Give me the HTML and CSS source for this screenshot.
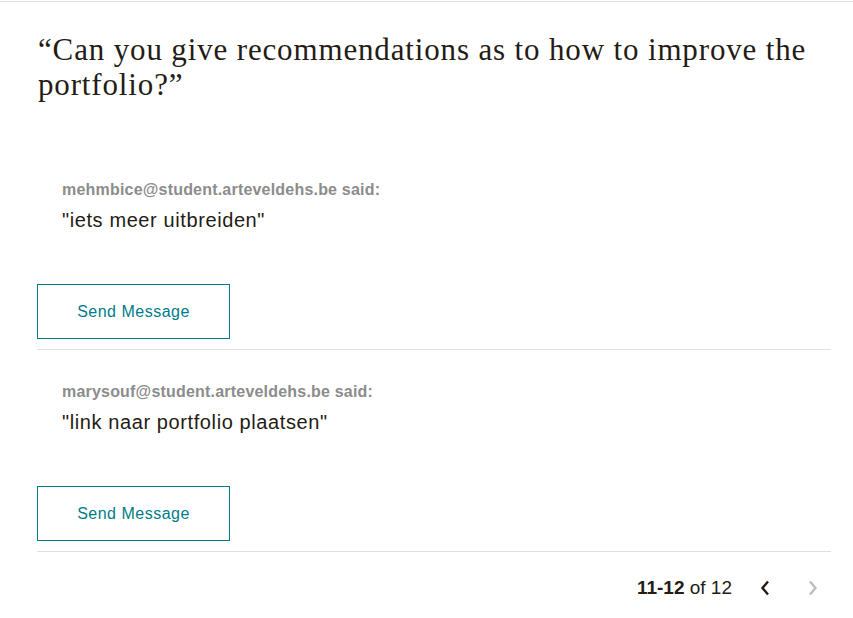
FILE: index.html
```html
<!DOCTYPE html>
<html>
<head>
<meta charset="utf-8">
<link rel="stylesheet" href="styles.css">
</head>
<body>
<div class="page">
  <h1 class="question">“Can you give recommendations as to how to improve the portfolio?”</h1>
  <div class="answers">
    <div class="answer">
      <div class="answer-body">
        <div class="author">mehmbice@student.arteveldehs.be said:</div>
        <div class="text">"iets meer uitbreiden"</div>
      </div>
      <button class="send">Send Message</button>
    </div>
    <div class="answer">
      <div class="answer-body">
        <div class="author">marysouf@student.arteveldehs.be said:</div>
        <div class="text">"link naar portfolio plaatsen"</div>
      </div>
      <button class="send">Send Message</button>
    </div>
  </div>
  <div class="pager">
    <span class="count"><b>11-12</b> of 12</span>
    <span class="arrow prev"><svg width="10" height="16" viewBox="0 0 10 16"><path d="M8 1.5 L2.5 8 L8 14.5" fill="none" stroke="currentColor" stroke-width="2.4"/></svg></span>
    <span class="arrow next"><svg width="10" height="16" viewBox="0 0 10 16"><path d="M2 1.5 L7.5 8 L2 14.5" fill="none" stroke="currentColor" stroke-width="2.4"/></svg></span>
  </div>
</div>
</body>
</html>
```
FILE: styles.css
```css
html, body {
  margin: 0;
  padding: 0;
  background: #fff;
}
body {
  border-top: 1px solid #e0e0e0;
  margin-top: 1px;
  font-family: "Liberation Sans", Arial, sans-serif;
  color: #241c15;
}
.page {
  padding: 0 22px 0 37px;
}
.question {
  margin: 30px 0 0 1px;
  font-family: "Liberation Serif", "Times New Roman", serif;
  font-weight: normal;
  font-size: 31px;
  letter-spacing: 0.85px;
  line-height: 35px;
  color: #241c15;
  max-width: 793px;
}
.answers {
  margin-top: 75px;
}
.answer {
  border-bottom: 1px solid #e0e0e0;
  padding-bottom: 10px;
  margin-bottom: 29px;
}
.answer-body {
  padding-left: 25px;
  height: 107px;
}
.author {
  padding-top: 3px;
  font-size: 16px;
  font-weight: bold;
  letter-spacing: 0.2px;
  color: #8c8c8c;
  line-height: 20px;
}
.text {
  margin-top: 8px;
  font-size: 20px;
  letter-spacing: 0.6px;
  line-height: 24px;
  color: #241c15;
}
.send {
  display: block;
  width: 193px;
  height: 55px;
  background: #fff;
  border: 1px solid #007c89;
  color: #007c89;
  font-family: "Liberation Sans", Arial, sans-serif;
  font-size: 16px;
  letter-spacing: 0.5px;
  padding: 0;
}
.pager {
  display: flex;
  justify-content: flex-end;
  align-items: center;
  margin-top: -4px;
  font-size: 19px;
}
.count {
  margin-right: 28px;
}
.arrow {
  display: flex;
  width: 10px;
}
.prev { color: #241c15; margin-right: 38px; }
.next { color: #bdbdbd; margin-right: 13px; }
```
